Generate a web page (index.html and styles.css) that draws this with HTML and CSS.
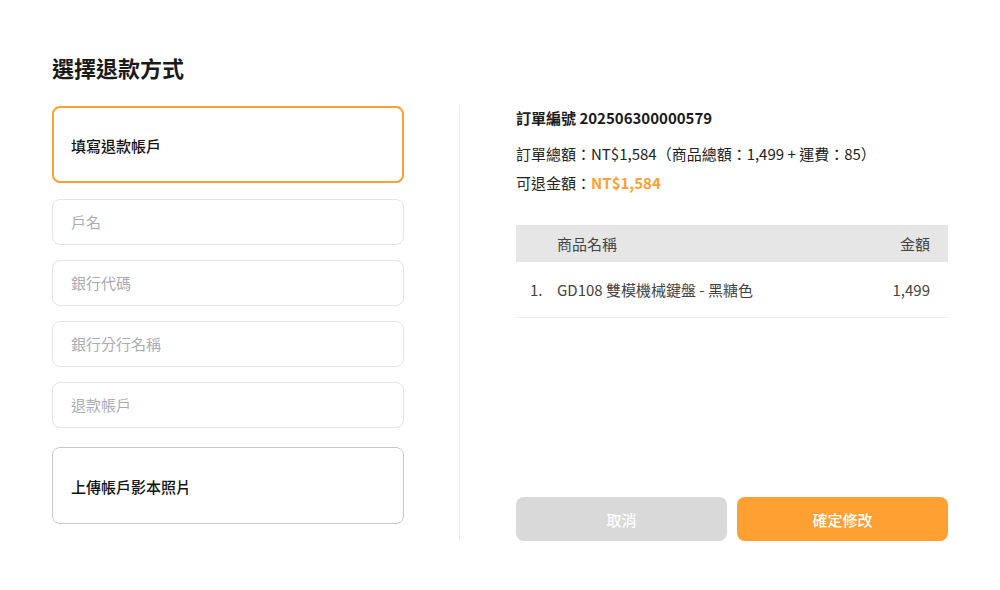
FILE: index.html
```html
<!DOCTYPE html>
<html lang="zh-Hant">
<head>
<meta charset="utf-8">
<title>選擇退款方式</title>
<link rel="stylesheet" href="styles.css">
</head>
<body>
<div class="page">
  <h1 class="title">選擇退款方式</h1>
  <div class="main">
    <div class="left">
      <div class="option option-active">填寫退款帳戶</div>
      <div class="fields">
        <div class="field">戶名</div>
        <div class="field">銀行代碼</div>
        <div class="field">銀行分行名稱</div>
        <div class="field">退款帳戶</div>
      </div>
      <div class="option option-plain">上傳帳戶影本照片</div>
    </div>
    <div class="divider"></div>
    <div class="right">
      <div class="order-no">訂單編號 202506300000579</div>
      <div class="line total">訂單總額：NT$1,584（商品總額：1,499 + 運費：85）</div>
      <div class="line refund">可退金額：<span class="hl">NT$1,584</span></div>
      <div class="table">
        <div class="thead">
          <span class="c-idx"></span>
          <span class="c-name">商品名稱</span>
          <span class="c-amt">金額</span>
        </div>
        <div class="trow">
          <span class="c-idx">1.</span>
          <span class="c-name">GD108 雙模機械鍵盤 - 黑糖色</span>
          <span class="c-amt">1,499</span>
        </div>
      </div>
      <div class="actions">
        <button class="btn btn-cancel">取消</button>
        <button class="btn btn-ok">確定修改</button>
      </div>
    </div>
  </div>
</div>
</body>
</html>
```
FILE: styles.css
```css
* { box-sizing: border-box; }
html, body { margin: 0; padding: 0; background: #fff; }
body {
  font-family: "Noto Sans CJK TC", sans-serif;
  color: #222;
  width: 1000px;
  height: 590px;
  overflow: hidden;
}
.page {
  padding: 52px 52px 0 52px;
}
.title {
  margin: 0;
  font-size: 22px;
  line-height: 30px;
  font-weight: 700;
  color: #1a1a1a;
}
.main {
  margin-top: 24px;
  display: flex;
  align-items: stretch;
}
.left {
  width: 352px;
  display: flex;
  flex-direction: column;
}
.option {
  height: 77px;
  border-radius: 8px;
  display: flex;
  align-items: center;
  padding-left: 18px;
  font-size: 15px;
  font-weight: 500;
  color: #111;
}
.option-active {
  border: 2px solid #ffa033;
  padding-left: 17px;
  padding-top: 2px;
}
.option-plain {
  border: 1px solid #c8c8c8;
  margin-top: 19px;
  padding-top: 2px;
}
.fields {
  margin-top: 16px;
  display: flex;
  flex-direction: column;
  gap: 15px;
}
.field {
  height: 46px;
  border: 1px solid #e3e5e8;
  border-radius: 8px;
  display: flex;
  align-items: center;
  padding-left: 18px;
  padding-bottom: 2px;
  font-size: 15px;
  color: #a9adb3;
}
.divider {
  width: 1px;
  background: #ececec;
  margin: 0 56px 0 55px;
  height: 435px;
}
.right {
  flex: 1;
  display: flex;
  flex-direction: column;
  height: 435px;
}
.order-no {
  font-size: 15px;
  font-weight: 700;
  line-height: 24px;
  color: #1a1a1a;
}
.line {
  font-size: 15px;
  line-height: 24px;
  color: #222;
}
.total { margin-top: 12px; }
.refund { margin-top: 5px; }
.hl { color: #ffa033; font-weight: 700; }
.table {
  margin-top: 30px;
  font-size: 15px;
  color: #444;
}
.thead, .trow {
  display: flex;
  align-items: center;
  padding-right: 18px;
}
.thead {
  height: 37px;
  background: #e6e6e6;
}
.trow {
  height: 56px;
  border-bottom: 1px solid #eeeeee;
}
.c-idx { width: 41px; padding-left: 14px; }
.c-name { flex: 1; }
.c-amt { text-align: right; }
.actions {
  margin-top: auto;
  display: flex;
  gap: 10px;
}
.btn {
  flex: 1;
  height: 44px;
  border: none;
  border-radius: 8px;
  font-family: "Noto Sans CJK TC", sans-serif;
  font-size: 15px;
  font-weight: 500;
  color: #fff;
  cursor: pointer;
}
.btn-cancel { background: #d9d9d9; }
.btn-ok { background: #ffa033; }
```
